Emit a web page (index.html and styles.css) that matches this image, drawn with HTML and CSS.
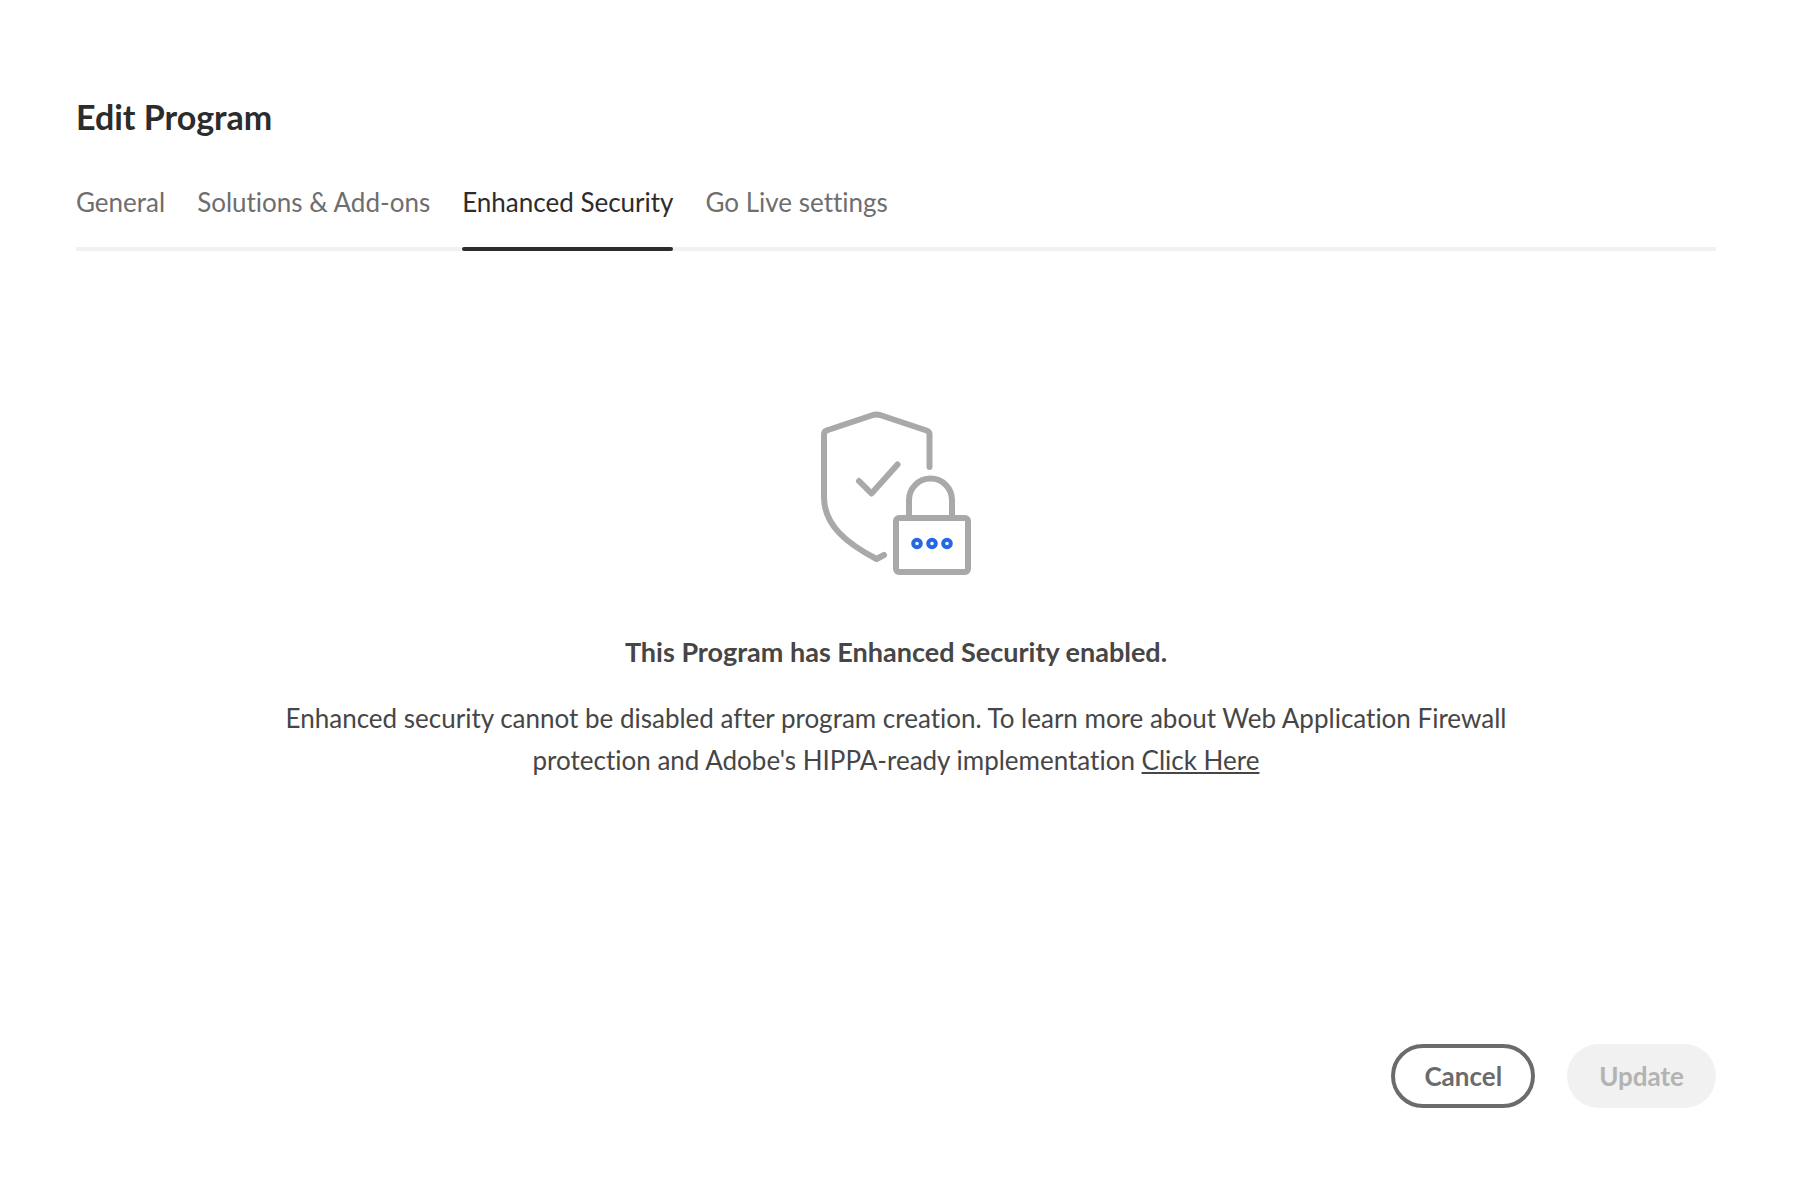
FILE: index.html
```html
<!DOCTYPE html>
<html lang="en">
<head>
<meta charset="utf-8">
<meta name="viewport" content="width=device-width, initial-scale=1">
<title>Edit Program</title>
<link rel="stylesheet" href="styles.css">
</head>
<body>
<main class="dialog">
  <h1 class="dialog-title">Edit Program</h1>
  <nav class="tabs" aria-label="Program settings">
    <a class="tab" href="#general">General</a>
    <a class="tab" href="#solutions">Solutions &amp; Add-ons</a>
    <a class="tab tab-selected" href="#security" aria-current="page">Enhanced Security</a>
    <a class="tab" href="#go-live">Go Live settings</a>
  </nav>
  <section class="message" id="security">
    <svg class="illustration" viewBox="0 0 152 166" fill="none" aria-hidden="true">
      <g stroke="#a9a9a9" stroke-width="6" stroke-linecap="round" stroke-linejoin="round">
        <path d="M109.500 56V23.500Q109.500 20.500 106.500 19.500L60 4Q56.500 3 53 4L6.500 19.500Q4 20.500 4 23.500V86C4 115 28 133 56.500 148L64 144"/>
        <path d="M39 70L51.500 82.500L77.500 53.500"/>
        <path d="M89 106V89A21.500 21.500 0 0 1 132 89V106" stroke-linecap="butt"/>
        <rect x="76" y="107" width="72" height="54" rx="3"/>
      </g>
      <g stroke="#2468e5" stroke-width="4">
        <circle cx="97" cy="132.500" r="3.800"/>
        <circle cx="112" cy="132.500" r="3.800"/>
        <circle cx="127" cy="132.500" r="3.800"/>
      </g>
    </svg>
    <h2 class="message-title">This Program has Enhanced Security enabled.</h2>
    <p class="message-text">Enhanced security cannot be disabled after program creation. To learn more about Web Application Firewall protection and Adobe's HIPPA-ready implementation <a class="link" href="#learn-more">Click Here</a></p>
  </section>
  <footer class="actions">
    <button class="button button-outline" type="button">Cancel</button>
    <button class="button" type="button" disabled>Update</button>
  </footer>
</main>
</body>
</html>
```
FILE: styles.css
```css
* {
  box-sizing: border-box;
}

body {
  margin: 0;
  background: #fff;
  color: #464646;
  font: 26px/42px Lato, "Noto Sans", sans-serif;
  font-variant-ligatures: none;
}

.dialog {
  display: flex;
  flex-direction: column;
  min-height: 100vh;
  padding: 95px 78px 74px 76px;
}

.dialog-title {
  margin: 0;
  color: #2c2c2c;
  font-size: 34px;
  line-height: 44px;
}

.tabs {
  display: flex;
  gap: 32px;
  margin-top: 42px;
  box-shadow: inset 0 -4px #f1f1f1;
}

.tab {
  padding-bottom: 28px;
  color: #6e6e6e;
  text-decoration: none;
}

.tab-selected {
  position: relative;
  color: #2c2c2c;
}

.tab-selected::after {
  content: "";
  position: absolute;
  right: 0;
  bottom: 0;
  left: 0;
  height: 4px;
  border-radius: 2px;
  background: #2c2c2c;
}

.message {
  display: flex;
  flex-direction: column;
  align-items: center;
  padding-top: 160px;
  text-align: center;
}

.illustration {
  width: 152px;
  height: 166px;
}

.message-title {
  margin: 54px 0 0;
  font-size: 27px;
  line-height: 42px;
}

.message-text {
  max-width: 1260px;
  margin: 24px 0 0;
}

.link {
  color: inherit;
  text-decoration-thickness: 2px;
  text-underline-offset: 2px;
}

.actions {
  display: flex;
  justify-content: flex-end;
  gap: 32px;
  margin-top: auto;
}

.button {
  height: 64px;
  padding: 0 32px;
  border: 0;
  border-radius: 32px;
  background: #f1f1f1;
  color: #b3b3b3;
  font: bold 26px/42px Lato, "Noto Sans", sans-serif;
}

.button-outline {
  border: 4px solid #6b6b6b;
  padding: 0 29px;
  background: #fff;
  color: #6b6b6b;
}
```
